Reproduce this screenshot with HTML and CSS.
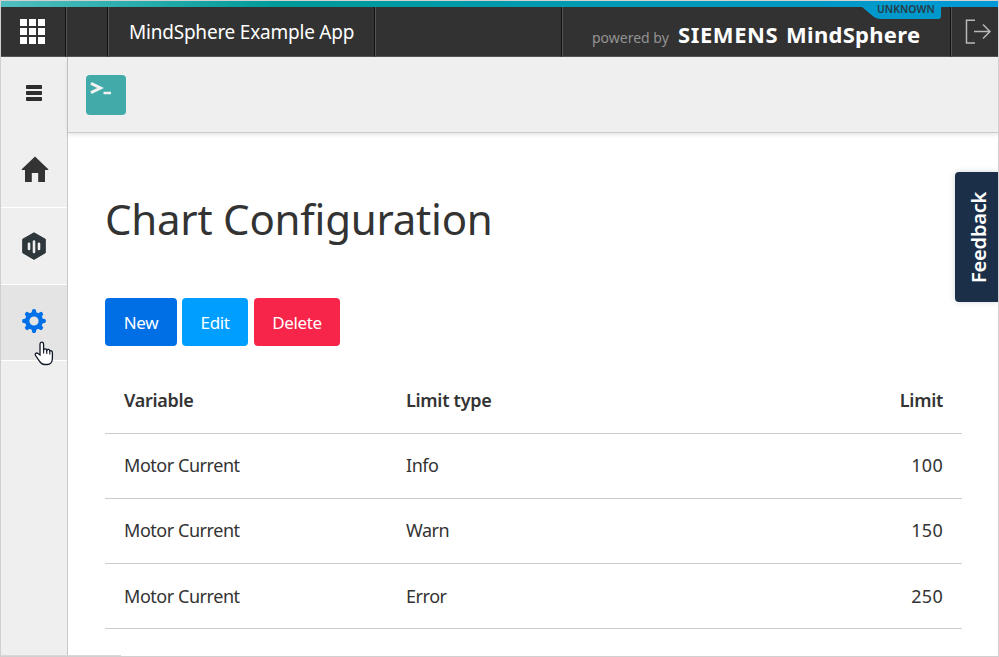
FILE: index.html
```html
<!DOCTYPE html>
<html lang="en">
<head>
<meta charset="utf-8">
<title>MindSphere Example App</title>
<link rel="stylesheet" href="styles.css">
</head>
<body>
<div class="window">
  <header class="topbar">
    <div class="cell launcher">
      <svg width="25" height="25" viewBox="0 0 25 25" fill="#fff"><path d="M0 0h7v7H0zM9 0h7v7H9zM18 0h7v7h-7zM0 9h7v7H0zM9 9h7v7H9zM18 9h7v7h-7zM0 18h7v7H0zM9 18h7v7H9zM18 18h7v7h-7z"/></svg>
    </div>
    <div class="cell spacer"></div>
    <div class="cell app-name"><span>MindSphere Example App</span></div>
    <div class="cell filler"></div>
    <div class="cell brand">
      <span class="powered">powered by</span>
      <span class="siemens">SIEMENS</span>
      <span class="mindsphere">MindSphere</span>
      <div class="env">
        <svg class="env-shape" width="79" height="13" viewBox="0 0 79 13"><path d="M0 0H79V9Q79 12 76 12H19Q15 12 12 10Z" fill="#0099cb"/></svg>
        <span>UNKNOWN</span>
      </div>
    </div>
    <div class="cell logout">
      <svg width="26" height="26" viewBox="0 0 26 26" fill="none" stroke="#b9b9b9" stroke-width="1.5"><path d="M10 1.2H1.5V24H10M9 12.5H25M18 5.5L25 12.5L18 19.5"/></svg>
    </div>
  </header>
  <div class="body">
    <nav class="sidebar">
      <div class="item menu">
        <svg width="16" height="16" viewBox="0 0 16 16" fill="#2d2d2d"><rect width="16" height="4" rx=".8"/><rect y="6" width="16" height="4" rx=".8"/><rect y="12" width="16" height="4" rx=".8"/></svg>
      </div>
      <div class="item home">
        <svg width="28" height="27" viewBox="0 0 28 27" fill="#333"><path d="M14 0.5L27.3 13.2V14H24V26H17.2V17H10.8V26H4V14H.7V13.2Z"/></svg>
      </div>
      <div class="item chart">
        <svg width="24" height="28" viewBox="0 0 24 28"><path d="M12 .8L23.3 7.2V20.8L12 27.4L.7 20.8V7.2Z" fill="#2d373c" stroke="#2d373c" stroke-linejoin="round"/><path d="M7 11.8V17M12 9.5V20M17 11.8V17" stroke="#efefef" stroke-width="2.6" stroke-linecap="round"/></svg>
      </div>
      <div class="item settings">
        <svg width="24" height="24" viewBox="-12 -12 24 24" fill="#0070e8"><path id="t" d="M-2.8 -7L-1.7 -11.4Q0 -12.4 1.7 -11.4L2.8 -7Z"/><use href="#t" transform="rotate(45)"/><use href="#t" transform="rotate(90)"/><use href="#t" transform="rotate(135)"/><use href="#t" transform="rotate(180)"/><use href="#t" transform="rotate(225)"/><use href="#t" transform="rotate(270)"/><use href="#t" transform="rotate(315)"/><circle r="6.8" fill="none" stroke="#0070e8" stroke-width="4.4"/></svg>
        <svg class="pointer" width="20" height="25" viewBox="0 0 20 25"><path d="M6 14V3.5C6 .3 9.6.3 9.6 3.5V9C10 7.3 12.7 7.5 12.8 9.2C13.5 7.8 15.7 8.3 15.8 10C16.9 9.2 18.4 9.9 18.4 11.6V17C18.4 20.5 17 23.5 13 23.5H10.5C8 23.5 6.5 22 5.4 20.2L1.6 14.5C.5 12.8 2.2 11.2 4 12.6Z" fill="#fff" stroke="#111827" stroke-width="1.3"/><path d="M9.6 8.5V12.5M12.8 9V13M15.8 10V13.5" stroke="#111827" stroke-width="1.1"/></svg>
      </div>
    </nav>
    <main class="main">
      <div class="toolbar">
        <div class="app-icon">
          <svg width="40" height="40" viewBox="0 0 40 40" fill="none" stroke="#f1f1f1" stroke-width="3"><path d="M5 8.4L14.5 13L5 17.6"/><path d="M17.5 18H25" stroke-width="2.4"/></svg>
        </div>
      </div>
      <section class="content">
        <h1>Chart Configuration</h1>
        <div class="actions">
          <button class="btn new">New</button>
          <button class="btn edit">Edit</button>
          <button class="btn delete">Delete</button>
        </div>
        <table>
          <thead><tr><th class="variable">Variable</th><th class="type">Limit type</th><th class="limit">Limit</th></tr></thead>
          <tbody>
            <tr><td>Motor Current</td><td>Info</td><td class="limit">100</td></tr>
            <tr><td>Motor Current</td><td>Warn</td><td class="limit">150</td></tr>
            <tr><td>Motor Current</td><td>Error</td><td class="limit">250</td></tr>
          </tbody>
        </table>
      </section>
    </main>
  </div>
  <div class="feedback"><span>Feedback</span></div>
  <div class="status"></div>
</div>
</body>
</html>
```

FILE: styles.css
```css
* { box-sizing: border-box; }
body {
  margin: 0;
  background: #fff;
  color: #333;
  font-family: "Noto Sans", "Open Sans", sans-serif;
  font-size: 18px;
}
svg { display: block; flex: none; }
.window {
  position: relative;
  display: flex;
  flex-direction: column;
  width: 999px;
  height: 657px;
  border: 1px solid #d0d0d0;
  overflow: hidden;
}
.topbar {
  display: flex;
  flex: none;
  height: 56px;
  padding-top: 6px;
  background: linear-gradient(90deg, #50bebe 0, #009a9a 28%, #0099b0 55%, #0099cb 88%, #0099d8 100%);
}
.cell {
  display: flex;
  align-items: center;
  flex: none;
  background: #323232;
  border-right: 1px solid #111;
  border-bottom: 1px solid #555;
  box-shadow: inset 1px 0 #555;
  white-space: nowrap;
}
.launcher { width: 65px; padding-left: 19px; box-shadow: none; }
.launcher svg { margin-top: -1px; }
.spacer { width: 42px; }
.app-name { width: 267px; padding-left: 21px; color: #fff; font-size: 19px; letter-spacing: -.22px; }
.filler { width: 187px; }
.brand { position: relative; width: 389px; padding: 5px 0 0 30px; color: #fff; font-weight: 700; font-size: 22px; }
.powered { width: 86px; color: #929292; font-size: 14px; font-weight: 400; padding-top: 7px; }
.siemens { width: 108px; letter-spacing: .6px; }
.mindsphere { letter-spacing: .28px; }
.logout { flex: 1; border-right: 0; padding-left: 14px; }
.env {
  position: absolute;
  left: 300px;
  top: 0;
  width: 79px;
  height: 13px;
  padding-left: 15px;
  color: #283c46;
  font-size: 10.5px;
  font-weight: 600;
  line-height: 5px;
}
.env-shape { position: absolute; left: 0; top: 0; }
.env span { position: relative; }
.body { display: flex; flex: 1; min-height: 0; }
.sidebar { flex: none; width: 67px; background: #efefef; border-right: 1px solid #c8c8c8; }
.item { position: relative; display: flex; align-items: center; justify-content: center; border-bottom: 1px solid #fff; }
.menu { height: 74px; padding-bottom: 2px; border-bottom: 0; }
.home { height: 77px; padding-left: 2px; }
.chart { height: 77px; }
.settings { height: 76px; background: #e4e4e4; padding-bottom: 3px; }
.pointer { position: absolute; left: 33px; top: 56px; }
.main { flex: 1; }
.toolbar { height: 76px; padding: 18px; background: #efefef; border-bottom: 1px solid #ccc; box-shadow: 0 2px 4px #0000001a; }
.app-icon { width: 40px; height: 40px; border-radius: 4px; background: #43aaaa; overflow: hidden; }
.content { padding: 56px 36px 0 37px; }
h1 { height: 60px; margin: 0 0 49px; font-size: 42px; font-weight: 400; line-height: 60px; letter-spacing: -.23px; white-space: nowrap; }
.actions { display: flex; }
.btn { height: 48px; padding: 2px 0 0; border: 0; border-radius: 4px; color: #fff; font: 17px/46px "Noto Sans", sans-serif; letter-spacing: -.4px; }
.new { width: 72px; margin-right: 5px; background: #006fe6; }
.edit { width: 66px; margin-right: 6px; background: #009fff; }
.delete { width: 86px; background: #f72549; }
table { width: 857px; margin-top: 22px; border-collapse: separate; border-spacing: 0; table-layout: fixed; }
th, td { height: 65px; padding: 0 19px 2px; border-bottom: 1px solid #ccc; text-align: left; line-height: 24px; }
td { letter-spacing: -.45px; }
th { height: 66px; font-weight: 600; letter-spacing: -.28px; }
tr:last-child td { padding-bottom: 0; }
.variable { width: 282px; }
.type { width: 280px; }
th.limit { text-align: right; }
td.limit { text-align: right; letter-spacing: .3px; }
.feedback {
  position: absolute;
  right: 0;
  top: 171px;
  display: flex;
  align-items: center;
  justify-content: center;
  width: 43px;
  height: 130px;
  padding-right: 4px;
  border-radius: 0 4px 4px 0;
  background: #1b3048;
  box-shadow: 0 0 6px #1b304830;
  color: #fff;
  font-size: 20px;
  font-weight: 600;
  letter-spacing: -.2px;
  writing-mode: vertical-rl;
  transform: rotate(180deg);
}
.status { position: absolute; left: 0; bottom: 0; width: 120px; height: 1px; background: #d8d8d8; }
```
